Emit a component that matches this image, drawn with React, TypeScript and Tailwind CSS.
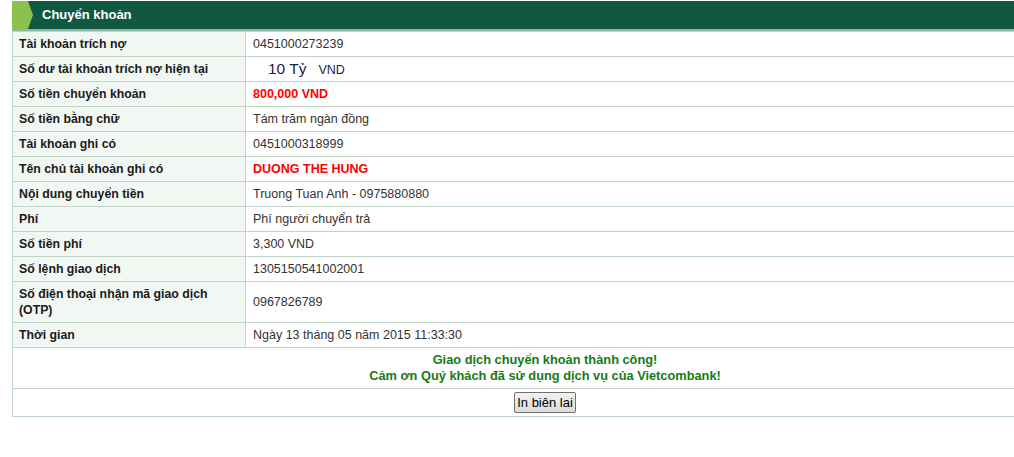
const rows: { label: React.ReactNode; key: string; value: React.ReactNode; tall?: boolean }[] = [
  { key: "a", label: "Tài khoản trích nợ", value: "0451000273239" },
  {
    key: "b",
    label: "Số dư tài khoản trích nợ hiện tại",
    value: (
      <span className="pl-[15px]">
        <span className="text-[15.5px] text-[#1c1c4a]">10 Tỷ</span>
        <span className="ml-[12px] text-[#1c1c4a]">VND</span>
      </span>
    ),
  },
  {
    key: "c",
    label: "Số tiền chuyển khoản",
    value: <span className="font-bold text-[#ff0000]">800,000 VND</span>,
  },
  { key: "d", label: "Số tiền bằng chữ", value: "Tám trăm ngàn đồng" },
  { key: "e", label: "Tài khoản ghi có", value: "0451000318999" },
  {
    key: "f",
    label: "Tên chủ tài khoản ghi có",
    value: <span className="font-bold text-[#ff0000]">DUONG THE HUNG</span>,
  },
  { key: "g", label: "Nội dung chuyển tiền", value: "Truong Tuan Anh - 0975880880" },
  { key: "h", label: "Phí", value: "Phí người chuyển trả" },
  { key: "i", label: "Số tiền phí", value: "3,300 VND" },
  { key: "j", label: "Số lệnh giao dịch", value: "1305150541002001" },
  {
    key: "k",
    label: (
      <>
        Số điện thoại nhận mã giao dịch
        <br />
        (OTP)
      </>
    ),
    value: "0967826789",
    tall: true,
  },
  { key: "l", label: "Thời gian", value: "Ngày 13 tháng 05 năm 2015 11:33:30" },
];

const App = () => {
  return (
    <div className="w-[1014px] h-[457px] overflow-hidden bg-white font-['Liberation_Sans',Arial,sans-serif] text-[12px]">
      <div className="ml-[12px] w-[1066px] pt-[1px]">
        <div className="flex h-[28px] items-stretch bg-[#105842]">
          <svg width="21" height="28" viewBox="0 0 21 28" className="shrink-0">
            <polygon points="0,0 16,0 21,14 16,28 0,28" fill="#8cc04f" />
          </svg>
          <span className="ml-[9px] self-center text-[13px] font-bold text-white">
            Chuyển khoản
          </span>
        </div>
        <div className="h-[2px] bg-[#8db8a0]" />
        <table className="w-full border-collapse">
          <tbody>
            {rows.map((r) => (
              <tr key={r.key} className={r.tall ? "h-[41px]" : "h-[25px]"}>
                <td className="w-[233px] border border-[#c2d6c6] bg-[#f1f7f3] px-[6px] py-0 text-[12.3px] font-bold leading-[16px] text-[#1a1a1a]">
                  {r.label}
                </td>
                <td className="border border-[#c2d6c6] px-[7px] py-0 text-[12.5px] text-[#333]">
                  {r.value}
                </td>
              </tr>
            ))}
            <tr className="h-[41px]">
              <td
                colSpan={2}
                className="border border-[#c2d6c6] text-center text-[12.8px] font-bold leading-[16px] text-[#167a16]"
              >
                Giao dịch chuyển khoản thành công!
                <br />
                Cảm ơn Quý khách đã sử dụng dịch vụ của Vietcombank!
              </td>
            </tr>
            <tr className="h-[28px]">
              <td colSpan={2} className="border border-[#c2d6c6] text-center">
                <button className="h-[21px] rounded-[2px] border border-[#707070] bg-gradient-to-b from-[#f2f2f2] to-[#dcdcdc] px-[2px] text-[13px] leading-[17px] text-black">
                  In biên lai
                </button>
              </td>
            </tr>
          </tbody>
        </table>
      </div>
    </div>
  );
};

export default App;
